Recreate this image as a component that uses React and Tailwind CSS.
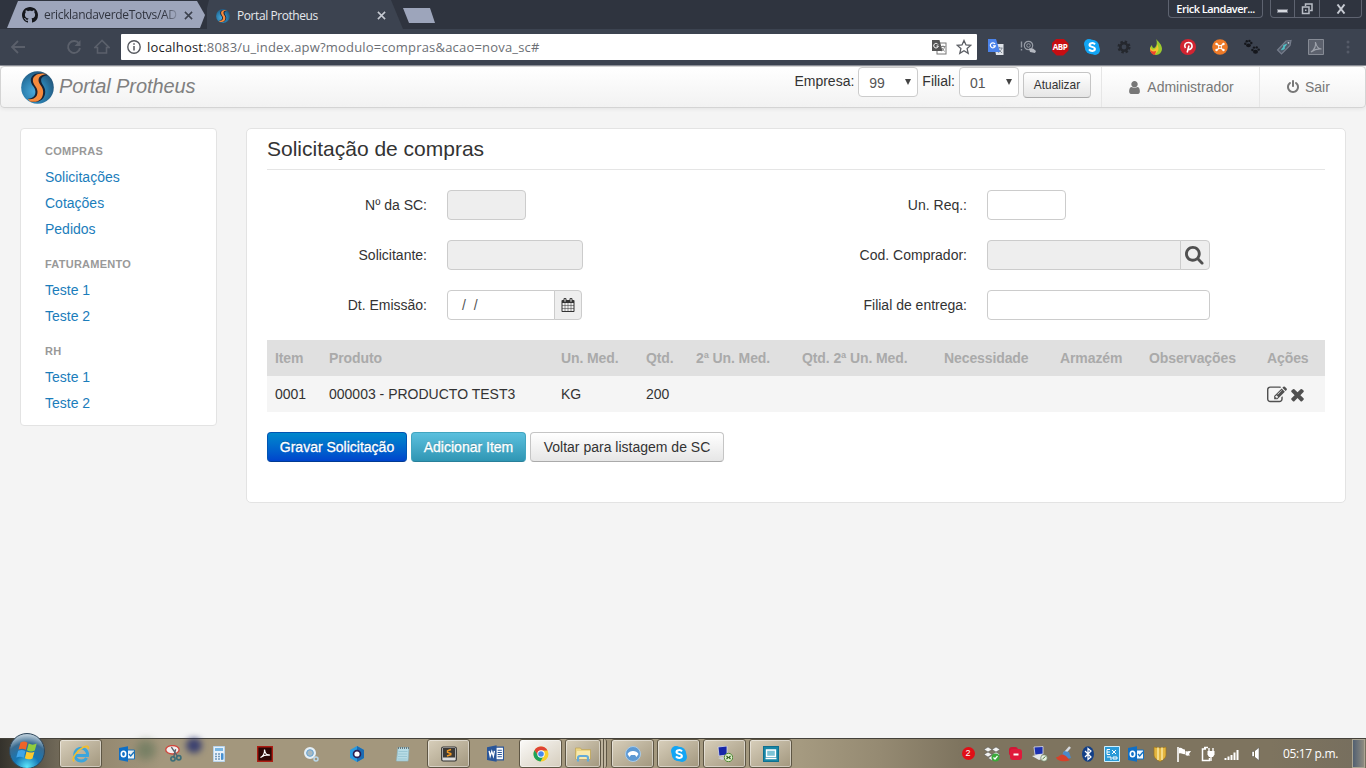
import React from "react";

const UI = "font-['Liberation_Sans',Arial,sans-serif]";
const SYS = "font-['Open_Sans','Noto_Sans',sans-serif]";

const GLYPHS = {
  search:
    "M1152 704q0-185-131.5-316.5t-316.5-131.5-316.5 131.5-131.5 316.5 131.5 316.5 316.5 131.5 316.5-131.5 131.5-316.5zm512 832q0 52-38 90t-90 38q-54 0-90-38l-343-342q-179 124-399 124-143 0-273.5-55.5t-225-150-150-225-55.5-273.5 55.5-273.5 150-225 225-150 273.5-55.5 273.5 55.5 225 150 150 225 55.5 273.5q0 220-124 399l343 343q37 37 37 90z",
  calendar:
    "M192 1664h288v-288h-288v288zm352 0h320v-288h-320v288zm-352-352h288v-320h-288v320zm352 0h320v-320h-320v320zm-352-384h288v-288h-288v288zm736 736h320v-288h-320v288zm-384-736h320v-288h-320v288zm768 736h288v-288h-288v288zm-384-352h320v-320h-320v320zm-352-864v-288q0-13-9.5-22.5t-22.5-9.5h-64q-13 0-22.5 9.5t-9.5 22.5v288q0 13 9.5 22.5t22.5 9.5h64q13 0 22.5-9.5t9.5-22.5zm736 864h288v-320h-288v320zm-384-384h320v-288h-320v288zm384 0h288v-288h-288v288zm32-480v-288q0-13-9.5-22.5t-22.5-9.5h-64q-13 0-22.5 9.5t-9.5 22.5v288q0 13 9.5 22.5t22.5 9.5h64q13 0 22.5-9.5t9.5-22.5zm384-64v1280q0 52-38 90t-90 38h-1408q-52 0-90-38t-38-90v-1280q0-52 38-90t90-38h128v-96q0-66 47-113t113-47h64q66 0 113 47t47 113v96h384v-96q0-66 47-113t113-47h64q66 0 113 47t47 113v96h128q52 0 90 38t38 90z",
  times:
    "M1490 1322q0 40-28 68l-136 136q-28 28-68 28t-68-28l-294-294-294 294q-28 28-68 28t-68-28l-136-136q-28-28-28-68t28-68l294-294-294-294q-28-28-28-68t28-68l136-136q28-28 68-28t68 28l294 294 294-294q28-28 68-28t68 28l136 136q28 28 28 68t-28 68l-294 294 294 294q28 28 28 68z",
  edit:
    "M888 1184l116-116-152-152-116 116v56h96v96h56zm440-720q-16-16-33 1l-350 350q-17 17-1 33t33-1l350-350q17-17 1-33zm80 594v190q0 119-84.5 203.5t-203.5 84.5h-832q-119 0-203.5-84.5t-84.5-203.5v-832q0-119 84.5-203.5t203.5-84.5h832q63 0 117 25 15 7 18 23 3 17-9 29l-49 49q-14 14-32 8-23-6-45-6h-832q-66 0-113 47t-47 113v832q0 66 47 113t113 47h832q66 0 113-47t47-113v-126q0-13 9-22l64-64q15-15 35-7t20 29zm-96-738l288 288-672 672h-288v-288zm444 132l-92 92-288-288 92-92q28-28 68-28t68 28l152 152q28 28 28 68t-28 68z",
  power:
    "M1664 896q0 156-61 298t-164 245-245 164-298 61-298-61-245-164-164-245-61-298q0-182 80.5-343t226.5-270q43-32 95.5-25t83.5 50q32 42 24.5 94.5t-49.5 84.5q-98 74-151.5 181t-53.5 228q0 104 40.5 198.5t109.5 163.5 163.5 109.5 198.5 40.5 198.5-40.5 163.5-109.5 109.5-163.5 40.5-198.5q0-121-53.5-228t-151.5-181q-42-32-49.5-84.5t24.5-94.5q31-43 84-50t95 25q146 109 226.5 270t80.5 343zm-640-768v640q0 52-38 90t-90 38-90-38-38-90v-640q0-52 38-90t90-38 90 38 38 90z",
  user:
    "M1536 1399q0 109-62.5 187t-150.5 78h-854q-88 0-150.5-78t-62.5-187q0-85 8.5-160.5t31.5-152 58.5-131 94-89 134.5-34.5q131 128 313 128t313-128q76 0 134.5 34.5t94 89 58.5 131 31.5 152 8.5 160.5zm-256-887q0 159-112.5 271.5t-271.5 112.5-271.5-112.5-112.5-271.5 112.5-271.5 271.5-112.5 271.5 112.5 112.5 271.5z",
};

function Glyph({ name, className }) {
  return (
    <svg viewBox="0 0 1792 1792" className={className} fill="currentColor">
      <path d={GLYPHS[name]} />
    </svg>
  );
}

function Logo({ className }) {
  return (
    <svg viewBox="0 0 32 32" className={className}>
      <defs>
        <radialGradient id="globe" cx=".4" cy=".62" r=".65">
          <stop offset="0" stopColor="#4aa9da" />
          <stop offset=".6" stopColor="#2a7cab" />
          <stop offset="1" stopColor="#22557a" />
        </radialGradient>
      </defs>
      <circle cx="16" cy="16" r="15.8" fill="url(#globe)" />
      <path d="M26 4C17 0 9.500 3 9.500 9c0 5 4.500 6.500 4.500 11 0 4-2 6-7 7l3 3c8 1 13.500-3 13.500-10 0-5-4-7-4-11 0-3 2.500-4.500 6.500-5z" fill="#172336" />
      <path d="M25.500 3C17.500 1 11.500 4 11.500 9c0 4.500 4.500 6.500 4.500 11 0 5-3 7.500-9.500 7.500l2.500 2C17 31 21.500 27 21.500 20c0-5-4.500-7-4.500-11 0-3.500 3-5.500 8.500-6z" fill="#f68a3c" />
    </svg>
  );
}

function Svg({ size = "size-4", box = 16, children }) {
  return (
    <svg viewBox={`0 0 ${box} ${box}`} className={`${size} shrink-0`} fill="none">
      {children}
    </svg>
  );
}

const TranslateGrey = (
  <Svg>
    <rect x="6" y="4" width="9" height="11" fill="#fff" stroke="#777" />
    <path d="M1 1h7.500l3 11H1z" fill="#555" />
    <path d="M7 5.500A2.300 2.300 0 1 0 7.300 7H5.500" stroke="#fff" />
    <path d="M9.500 7.500h5M12 6.500v1M13.500 8c-.5 2-1.500 3-3 4M11 9l2.500 3.500" stroke="#777" strokeWidth=".9" />
  </Svg>
);

const OutlookIcon = (
  <Svg>
    <path d="M8 4h7.500v9H8z" fill="#f4f8fc" stroke="#1272c4" />
    <path d="M10 8l1.700 2L15 6" stroke="#1272c4" strokeWidth="1.300" />
    <path d="M0 2l9-1.800v15.600L0 14z" fill="#0f6fc6" />
    <ellipse cx="4.500" cy="8" rx="2.200" ry="2.700" stroke="#fff" strokeWidth="1.600" />
  </Svg>
);

const SkypeIcon = (
  <Svg>
    <circle cx="5" cy="5" r="5" fill="#12a5f4" />
    <circle cx="11" cy="11" r="5" fill="#12a5f4" />
    <circle cx="8" cy="8" r="7.300" fill="#12a5f4" />
    <path d="M11 5.300C9.500 3.500 5.500 3.800 5.500 6c0 2.300 5.400 1.500 5.400 4 0 2.300-4.200 2.600-5.900.4" stroke="#fff" strokeWidth="2" />
  </Svg>
);

const EXTENSIONS = [
  <Svg>
    <path d="M6 5h9.500v11H8z" fill="#dfe3e8" />
    <path d="M8.500 9h6M11.500 8v1M14 9c-.5 2-2 3.500-4 4.500M10 10l4 4" stroke="#7a8390" strokeWidth=".9" />
    <path d="M0 0h8l4 13H0z" fill="#4b83ea" />
    <path d="M7 5A2.500 2.500 0 1 0 7.300 6.800H5" stroke="#fff" strokeWidth="1.200" />
  </Svg>,
  <Svg>
    <path d="M1.500 2.500v6M1.500 10v1.500" stroke="#9297a1" strokeWidth="1.400" />
    <circle cx="8.500" cy="6.500" r="4.200" stroke="#969ba5" strokeWidth="1.200" />
    <circle cx="8.500" cy="6.500" r="1.800" stroke="#969ba5" />
    <path d="M9 9.500h4l3 2.500-1 2-5-1z" fill="#b4b8c0" />
  </Svg>,
  <div className="flex size-[17px] items-center justify-center bg-[#c70d12] text-[8px] font-bold tracking-[-0.4px] text-white [clip-path:polygon(30%_0,70%_0,100%_30%,100%_70%,70%_100%,30%_100%,0_70%,0_30%)]">ABP</div>,
  SkypeIcon,
  <Svg>
    <circle cx="8" cy="8" r="5" stroke="#25282e" strokeWidth="3" strokeDasharray="2.200 1.730" />
    <circle cx="8" cy="8" r="3.700" stroke="#25282e" strokeWidth="2.600" />
  </Svg>,
  <Svg>
    <path d="M8 0c3 3 6 6 6 10a6 6 0 0 1-12 0c0-1 .5-3 2-4 0 2 1 3 2 3C9 8 9.500 3 8 0z" fill="#9dcb2d" />
    <path d="M3 8c0 2 1 3 3 2.500C9 9 9 7 9 5c3 5 1 8-2 10-3 0-5-2.500-5-5z" fill="#f5c52c" />
    <path d="M2 9c0 3 3 4 6 3 0 1-1 3-1 4-3 0-5-3-5-7z" fill="#ee432f" />
  </Svg>,
  <Svg>
    <circle cx="8" cy="8" r="8" fill="#d22431" />
    <path d="M7.200 13.500L9 6.500M5.500 9C3.500 6 5.500 3.500 8.500 3.500c4 0 4.500 5 2 6.500-1.300.8-2.500.3-2.600-.6" stroke="#fff" strokeWidth="1.600" />
  </Svg>,
  <Svg>
    <circle cx="8" cy="8" r="7.800" fill="#ee7a28" />
    <path d="M5 5l6 6M11 5l-6 6" stroke="#fff" strokeWidth="1.300" />
    <circle cx="8" cy="8" r="1.900" fill="#fff" />
    <circle cx="8" cy="8" r="1" fill="#ee7a28" />
    <circle cx="4.500" cy="5" r="1.200" fill="#fff" /><circle cx="11.500" cy="5" r="1.200" fill="#fff" />
    <circle cx="4.500" cy="11" r="1.200" fill="#fff" /><circle cx="11.500" cy="11" r="1.200" fill="#fff" />
  </Svg>,
  <Svg>
    <g fill="#15171c">
      <ellipse cx="4.500" cy="6.300" rx="2.400" ry="1.900" />
      <circle cx="1.300" cy="4.800" r="1.200" /><circle cx="2.800" cy="2.300" r="1.200" /><circle cx="5.400" cy="1.900" r="1.200" /><circle cx="7.300" cy="4" r="1.200" />
      <ellipse cx="11.500" cy="12.700" rx="2.500" ry="2" />
      <circle cx="8.400" cy="11" r="1.200" /><circle cx="10" cy="8.600" r="1.200" /><circle cx="12.700" cy="8.400" r="1.200" /><circle cx="14.700" cy="10.600" r="1.200" />
    </g>
  </Svg>,
  <Svg>
    <path d="M15 1.500L10 2 1.500 11l4 4L14 6.500z" fill="#505a69" stroke="#767d8b" strokeWidth="1.200" />
    <path d="M10 6.500c-2-1-3 .5-2 1.500s0 2.800-2 1.700M10.500 5l-5 6" stroke="#52bfc5" strokeWidth="1.200" />
    <circle cx="12.500" cy="3.800" r=".9" fill="#c5cad3" />
  </Svg>,
  <Svg>
    <path d="M.5.5h15v15H.5z" fill="#5c616d" stroke="#868b95" />
    <path d="M3 13c3-2 5-6 4.500-10 1 5 3 7 6 7-4-.5-7 .5-10.500 3z" stroke="#9da1aa" strokeWidth="1.200" />
  </Svg>,
  <Svg>
    <g fill="#555b68"><circle cx="8" cy="3" r="1.500" /><circle cx="8" cy="8" r="1.500" /><circle cx="8" cy="13" r="1.500" /></g>
  </Svg>,
];

function CloseX({ className }) {
  return (
    <svg viewBox="0 0 10 10" className={className} stroke="currentColor" strokeWidth="1.700">
      <path d="M1 1l8 8M9 1L1 9" />
    </svg>
  );
}

function TabStrip() {
  return (
    <div className="flex h-[29px] items-start bg-[#2f343f] pl-[7px]">
      <div className="flex h-[28px] w-[200px] items-center bg-[#9da5bb] pl-[15px] [clip-path:polygon(0_100%,11px_1px,190px_1px,198px_15px,193px_100%)]">
        <svg viewBox="0 0 16 16" className="mt-px size-4 shrink-0" fill="#15171c">
          <path d="M8 0C3.580 0 0 3.580 0 8c0 3.540 2.290 6.530 5.470 7.590.4.070.55-.17.55-.38 0-.19-.01-.82-.01-1.490-2.010.37-2.530-.49-2.690-.94-.09-.23-.48-.94-.82-1.130-.28-.15-.68-.52-.01-.53.63-.01 1.080.58 1.230.82.720 1.210 1.870.87 2.330.66.070-.52.280-.87.510-1.070-1.780-.2-3.640-.89-3.640-3.950 0-.87.310-1.590.820-2.150-.08-.2-.36-1.020.080-2.120 0 0 .67-.21 2.200.82.640-.18 1.320-.27 2-.27s1.360.09 2 .27c1.530-1.040 2.200-.82 2.200-.82.440 1.100.160 1.920.080 2.120.510.560.820 1.270.820 2.150 0 3.070-1.870 3.750-3.650 3.950.290.250.540.730.540 1.480 0 1.070-.01 1.930-.01 2.200 0 .210.150.460.550.380A8.010 8.010 0 0 0 16 8c0-4.420-3.580-8-8-8z" />
        </svg>
        <span className="ml-[6px] mt-px w-[133px] whitespace-nowrap text-[12px] tracking-[-0.32px] text-[#30343f] [mask-image:linear-gradient(90deg,#000_90%,rgba(0,0,0,0.2))]">ericklandaverdeTotvs/AD</span>
        <CloseX className="ml-[7px] mt-[2px] size-[9px] shrink-0 text-[#3c414d]" />
      </div>
      <div className="flex h-[29px] w-[197px] items-center bg-[#3c4350] pl-[9px] [clip-path:polygon(2px_0,184px_0,196px_100%,0_100%,0_8px)]">
        <Logo className="mt-[2px] size-[14px]" />
        <span className="ml-[7px] mt-[2px] whitespace-nowrap text-[12px] tracking-[-0.43px] text-[#e6e8ec]">Portal Protheus</span>
        <CloseX className="ml-auto mr-[18px] mt-[2px] size-[9px] text-[#c6cad2]" />
      </div>
      <div className="-ml-px mt-2 h-[15px] w-8 bg-[#9da5bb] [clip-path:polygon(0_0,27px_0,32px_100%,6px_100%)]" />
      <div className="ml-auto flex h-[18px] pr-[4px] text-[#d5d8de]">
        <div className="flex h-[18px] w-[95px] items-center justify-center rounded-b border border-t-0 border-[#5e6370] text-[11px] font-semibold tracking-[-0.52px] text-white"><span className="mt-px">Erick Landaver...</span></div>
        <div className="ml-[7px] flex h-[18px] rounded-b border border-t-0 border-[#5e6370]">
          <div className="flex w-[24px] items-center justify-center border-r border-[#5e6370]">
            <div className="mt-1 h-[4px] w-[11px] border border-[#777b86] bg-[#d5d8de]" />
          </div>
          <div className="flex w-[25px] items-center justify-center border-r border-[#5e6370]">
            <Svg size="size-3" box={12}>
              <path d="M4.500 3V1h6.500v6.500H9" stroke="#b9bdc6" strokeWidth="1.500" />
              <path d="M1.500 4h6.500v6.500H1.500z" stroke="#b9bdc6" strokeWidth="1.500" />
              <path d="M4 6.500h1.500V8H4z" fill="#b9bdc6" />
            </Svg>
          </div>
          <div className="flex w-[41px] items-center justify-center">
            <svg viewBox="0 0 10 10" className="size-[10px]" stroke="#c6cad2" strokeWidth="2">
              <path d="M1.500 .5l7 9M8.500 .5l-7 9" />
            </svg>
          </div>
        </div>
      </div>
    </div>
  );
}

function Toolbar() {
  return (
    <div className="flex h-[37px] items-center border-b border-[#8b8e96] bg-[#3c4350] pl-[10px] pr-[2px]">
      <Svg><path d="M15 8H2M8 2L2 8l6 6" stroke="#5b606b" strokeWidth="1.800" /></Svg>
      <span className="w-[40px]" />
      <Svg>
        <path d="M13 4.500A6 6 0 1 0 14 9" stroke="#5b606b" strokeWidth="1.900" />
        <path d="M14.500 1v6h-6z" fill="#5b606b" />
      </Svg>
      <span className="w-[12px]" />
      <Svg><path d="M8 1.500L1 8.500h2.500V14h9V8.500H15z" stroke="#5b606b" strokeWidth="1.600" /></Svg>
      <div className="ml-[11px] flex h-[26px] w-[856px] items-center rounded-[1px] bg-white pl-[6px] pr-[5px]">
        <Svg size="size-[14px]" box={14}>
          <circle cx="7" cy="7" r="6.200" stroke="#55585e" strokeWidth="1.400" />
          <path d="M7 6v4.500M7 3.300v1.500" stroke="#55585e" strokeWidth="1.500" />
        </Svg>
        <span className="ml-[6px] mt-px whitespace-nowrap text-[13px] tracking-[0.19px] text-[#6c6f75]">
          <span className="text-[#1b1c1e]">localhost</span>:8083/u_index.apw?modulo=compras&amp;acao=nova_sc#
        </span>
        <span className="ml-auto">{TranslateGrey}</span>
        <span className="ml-[9px]">
          <Svg><path d="M8 1.500l2 4.500 4.700.4-3.600 3.200 1.100 4.700L8 11.800l-4.200 2.500 1.100-4.700L1.300 6.400 6 6z" stroke="#5a5d63" strokeWidth="1.300" /></Svg>
        </span>
      </div>
      <div className="ml-[3px] flex items-center">
        {EXTENSIONS.map((icon, i) => (
          <div key={i} className="flex w-8 justify-center">{icon}</div>
        ))}
      </div>
    </div>
  );
}

function NavSelect({ value }) {
  return (
    <div className="flex h-[30px] w-[60px] items-center justify-between rounded border border-[#ccc] bg-white pl-[10px] pr-[6px] text-[#555]">
      <span className="pt-[2px]">{value}</span>
      <span className="h-0 w-0 border-x-[3px] border-t-[6px] border-x-transparent border-t-[#444]" />
    </div>
  );
}

function Navbar() {
  return (
    <div className="flex h-[42px] items-start rounded border border-[#d4d4d4] bg-linear-to-b from-white to-[#f2f2f2] pl-[20px] shadow-[0_1px_4px_rgba(0,0,0,0.065)]">
      <Logo className="mt-[4px] size-[33px]" />
      <span className="ml-[5px] mt-[5px] text-[20px] italic leading-[28px] tracking-[-0.1px] text-[#808080]">Portal Protheus</span>
      <div className="ml-auto flex items-start">
        <span className="mr-[4px] mt-[4px]">Empresa:</span>
        <NavSelect value="99" />
        <span className="mx-[4px] mt-[4px]">Filial:</span>
        <NavSelect value="01" />
        <div className="ml-[4px] mt-[5px] flex h-[26px] w-[68px] items-center justify-center rounded border border-[#c5c5c5] border-b-[#aaa] bg-linear-to-b from-white to-[#e6e6e6] text-[11.9px]">Atualizar</div>
      </div>
      <div className="ml-[10px] flex h-[40px] w-[158px] items-center justify-center border-l border-[#e6e6e6] text-[#777]">
        <Glyph name="user" className="mr-[5px] size-[15px]" />
        <span>Administrador</span>
      </div>
      <div className="flex h-[40px] w-[106px] items-center border-l border-[#e6e6e6] pl-[26px] text-[#777]">
        <Glyph name="power" className="mr-[5px] size-[14px]" />
        <span>Sair</span>
      </div>
    </div>
  );
}

const MENU = [
  { title: "COMPRAS", items: ["Solicitações", "Cotações", "Pedidos"] },
  { title: "FATURAMENTO", items: ["Teste 1", "Teste 2"] },
  { title: "RH", items: ["Teste 1", "Teste 2"] },
];

function Sidebar() {
  return (
    <nav className="flex h-[298px] w-[197px] flex-col gap-[9px] rounded border border-[#e3e3e3] bg-white pl-[24px] pt-[9px]">
      {MENU.map((group) => (
        <div key={group.title}>
          <div className="h-[26px] text-[11px] font-bold leading-[27px] tracking-[0.25px] text-[#999]">{group.title}</div>
          {group.items.map((item) => (
            <div key={item} className="h-[26px] leading-[27px] text-[#1b7dbb]">{item}</div>
          ))}
        </div>
      ))}
    </nav>
  );
}

function Field({ label, children }) {
  return (
    <div className="flex h-[30px] gap-[20px]">
      <div className="w-[160px] text-right leading-[31px]">{label}</div>
      {children}
    </div>
  );
}

const BOX = "h-[30px] border border-[#ccc]";
const OFF = "bg-[#eee]";

function Form() {
  return (
    <div className="mt-[20px] grid grid-cols-[540px_1fr] gap-y-[20px]">
      <Field label="Nº da SC:"><div className={`${BOX} ${OFF} w-[79px] rounded`} /></Field>
      <Field label="Un. Req.:"><div className={`${BOX} w-[79px] rounded`} /></Field>
      <Field label="Solicitante:"><div className={`${BOX} ${OFF} w-[136px] rounded`} /></Field>
      <Field label="Cod. Comprador:">
        <div className="flex">
          <div className={`${BOX} ${OFF} w-[194px] rounded-l`} />
          <div className={`${BOX} ${OFF} -ml-px flex w-[30px] items-center justify-center rounded-r text-[#505050]`}>
            <Glyph name="search" className="mt-[2px] size-[20px]" />
          </div>
        </div>
      </Field>
      <Field label="Dt. Emissão:">
        <div className="flex">
          <div className={`${BOX} w-[108px] whitespace-pre rounded-l pl-[14px] leading-[29px] text-[#555]`}>/  /</div>
          <div className={`${BOX} ${OFF} -ml-px flex w-[28px] items-center justify-center rounded-r text-[#333]`}>
            <Glyph name="calendar" className="size-[14px]" />
          </div>
        </div>
      </Field>
      <Field label="Filial de entrega:"><div className={`${BOX} w-[223px] rounded`} /></Field>
    </div>
  );
}

const COLUMNS = ["Item", "Produto", "Un. Med.", "Qtd.", "2ª Un. Med.", "Qtd. 2ª Un. Med.", "Necessidade", "Armazém", "Observações", "Ações"];
const ROW = ["0001", "000003 - PRODUCTO TEST3", "KG", "200", "", "", "", "", ""];
const TRACKS = "grid grid-cols-[54px_232px_85px_50px_106px_142px_116px_89px_118px_66px] h-[36px] leading-[37px] whitespace-nowrap";

function Table() {
  return (
    <div className="mt-[20px]">
      <div className={`${TRACKS} bg-[#e0e0e0] font-bold tracking-[-0.1px] text-[#aaa]`}>
        {COLUMNS.map((c) => <div key={c} className="pl-2">{c}</div>)}
      </div>
      <div className={`${TRACKS} bg-[#f5f5f5]`}>
        {ROW.map((c, i) => <div key={i} className="pl-2">{c}</div>)}
        <div className="flex items-center gap-px pl-2 text-[#505050]">
          <Glyph name="edit" className="size-[20px]" />
          <Glyph name="times" className="-mt-px size-[19px]" />
        </div>
      </div>
    </div>
  );
}

function Buttons() {
  const base = "flex h-[30px] items-center justify-center rounded border";
  return (
    <div className="mt-[20px] flex gap-[4px]">
      <div className={`${base} w-[140px] border-[#0055b3] border-b-[#003a93] bg-linear-to-b from-[#0088cc] to-[#0044cc] text-white [-webkit-text-stroke:0.3px_white] [text-shadow:0_-1px_0_rgba(0,0,0,0.25)]`}>Gravar Solicitação</div>
      <div className={`${base} w-[115px] border-[#42a5c0] border-b-[#28809a] bg-linear-to-b from-[#5bc0de] to-[#2f96b4] text-white [-webkit-text-stroke:0.3px_white] [text-shadow:0_-1px_0_rgba(0,0,0,0.25)]`}>Adicionar Item</div>
      <div className={`${base} w-[194px] border-[#c5c5c5] border-b-[#aaa] bg-linear-to-b from-white to-[#e6e6e6]`}>Voltar para listagem de SC</div>
    </div>
  );
}

const Word = (
  <Svg size="size-[17px]">
    <path d="M8 2h7.500v12H8z" fill="#fff" stroke="#2a5699" />
    <path d="M10 5h4M10 7h4M10 9h4M10 11h4" stroke="#2a5699" />
    <path d="M0 2l9-1.800v15.600L0 14z" fill="#2a5699" />
    <path d="M2 5.500l1 5 1.500-4.500L6 10.500l1-5" stroke="#fff" strokeWidth="1.200" />
  </Svg>
);

const APPS = [
  { kind: "open", icon: (
    <Svg size="size-[18px]">
      <path d="M2.300 9.300h11.500A5.700 5.700 0 1 0 13 11.500" stroke="#3ba5dd" strokeWidth="2.600" />
      <path d="M2 14.500C-1 13 4 5 10 2c3-1.500 5-1 4.500 1.500" stroke="#f2bd2c" strokeWidth="1.500" />
    </Svg>) },
  { icon: OutlookIcon },
  { icon: (
    <Svg size="size-[17px]">
      <ellipse cx="7" cy="4.500" rx="6.300" ry="4" fill="#f4eeee" stroke="#d0483d" strokeWidth="1.300" />
      <path d="M6 2l6 9M10 4l-2 8" stroke="#59606b" strokeWidth="1.300" />
      <circle cx="7.500" cy="13" r="2" stroke="#3c6d78" strokeWidth="1.500" /><circle cx="13" cy="12" r="2" stroke="#3c6d78" strokeWidth="1.500" />
    </Svg>) },
  { icon: (
    <Svg>
      <path d="M2.500.5h11v15h-11z" fill="#e7f1fa" stroke="#b8d3ea" />
      <path d="M4 2h8v3H4z" fill="#78b6e3" />
      <path d="M4 8h8M4 10.500h8M4 13h8" stroke="#7198bb" strokeWidth="1.500" strokeDasharray="2 1" />
      <path d="M10 7.500h2.500v6H10z" fill="#4591d2" />
    </Svg>) },
  { icon: (
    <Svg>
      <path d="M.7.7h14.600v14.600H.7z" fill="#2b0806" stroke="#ad1d13" strokeWidth="1.400" />
      <path d="M3.500 11.500C6 10.500 8 7 7.500 3.500c.5 4 2 6 5.500 5.500-4-.5-6 0-9.500 2.500z" stroke="#fff" strokeWidth="1.200" />
    </Svg>) },
  { icon: (
    <Svg>
      <circle cx="7" cy="7" r="4.800" fill="#a9b9bf" stroke="#e4eff6" strokeWidth="2.400" />
      <circle cx="7" cy="7" r="3.300" stroke="#65a5d6" />
      <circle cx="13" cy="13" r="2" stroke="#b9d7ea" strokeWidth="1.500" />
    </Svg>) },
  { icon: (
    <Svg>
      <path d="M8 0l7 4v8l-7 4-7-4V4z" fill="#2a9be0" />
      <path d="M8 0l7 4v8l-7 4z" fill="#1b6cb4" />
      <circle cx="8" cy="8" r="4.300" fill="#2a2055" /><circle cx="8" cy="8" r="2.600" fill="#fff" />
    </Svg>) },
  { icon: (
    <Svg>
      <path d="M3 1.500h11L13 15H1.500z" fill="#b8dce5" stroke="#8fbcc9" strokeWidth=".7" />
      <path d="M3 2h11" stroke="#68767b" strokeWidth="2" strokeDasharray="1 1" />
      <path d="M3.500 5.500h9M3.200 8h9M3 10.500h9M2.800 13h9" stroke="#92c2cf" strokeWidth=".8" />
    </Svg>) },
  { kind: "open", icon: (
    <Svg>
      <rect x=".7" y="1" width="14.600" height="14" rx="1.500" fill="#ddd" stroke="#333" strokeWidth="1.200" />
      <path d="M2 2h12v9.500H2z" fill="#3d3a36" />
      <path d="M10 3.500L6.500 4.800v1.500l3.300 1.200v1.200L6 10" stroke="#f59a22" strokeWidth="1.400" />
    </Svg>) },
  { icon: Word },
  { kind: "active", icon: (
    <Svg>
      <circle cx="8" cy="8" r="7.500" fill="#f9cf2c" />
      <path d="M1.500 4.200A7.500 7.500 0 0 1 14.500 4.500H8L5 10z" fill="#df4234" />
      <path d="M1.500 4.200A7.500 7.500 0 0 0 7.500 15.500l3.300-6L8 11 5 9.500z" fill="#1ca25c" />
      <circle cx="8" cy="8" r="3.700" fill="#fff" /><circle cx="8" cy="8" r="2.800" fill="#4688ee" />
    </Svg>) },
  { kind: "stack", icon: (
    <Svg>
      <path d="M.5 2h5l1 1.500h9V13H.5z" fill="#ecd583" stroke="#bba258" strokeWidth=".7" />
      <path d="M2 5h13v8H1z" fill="#f7e9ac" />
      <path d="M3 15.500V12a2 2 0 0 1 2-2h6a2 2 0 0 1 2 2v3.500" stroke="#64abd8" strokeWidth="2.200" />
    </Svg>) },
  { kind: "open", icon: (
    <Svg>
      <circle cx="8" cy="8" r="7.500" fill="#5d99d3" stroke="#a9cce8" />
      <path d="M2.500 8c2-4 9-4 11 0l-2 3-1.500-2H6l-1.500 2z" fill="#fff" />
    </Svg>) },
  { kind: "open", icon: SkypeIcon },
  { kind: "open", icon: (
    <Svg>
      <path d="M1 1l9-1v9l-8 1z" fill="#1726a8" stroke="#d7dce8" strokeWidth=".8" />
      <path d="M1 12l7-2 3 2-6 2z" fill="#c9ced6" />
      <circle cx="11.500" cy="11.500" r="4.200" fill="#dcedc9" stroke="#4f8833" />
      <path d="M9.500 10l1.500 1.500L9.500 13M13.500 10L12 11.500l1.500 1.500" stroke="#2e5d19" strokeWidth="1.100" />
    </Svg>) },
  { kind: "open", icon: (
    <Svg>
      <rect x=".5" y=".5" width="15" height="15" fill="#1786a6" stroke="#0f6f8f" />
      <path d="M3.500 4h9v6.500h-9z" fill="#7cc3d6" stroke="#fff" strokeWidth="1.400" /><path d="M2.500 12.500h11" stroke="#fff" strokeWidth="1.500" />
    </Svg>) },
];

function AppCell({ app }) {
  if (!app.kind) return <div className="flex w-[46px] items-center justify-center">{app.icon}</div>;
  if (app.kind === "stack") {
    return (
      <div className="flex w-[46px] pl-[1px]">
        <div className="flex w-[36px] items-center justify-center rounded-[3px] border border-[#5e5644] bg-linear-to-br from-[#d8cfbb] to-[#a2977e] shadow-[inset_0_0_0_1px_rgba(255,255,255,0.45)]">{app.icon}</div>
        <div className="w-[3px] border-r border-[#5e5644] bg-[#bdb39d]" />
        <div className="w-[3px] rounded-r border-r border-[#5e5644] bg-[#bdb39d]" />
      </div>
    );
  }
  const fill = app.kind === "active" ? "bg-linear-to-br from-[#fbfaf8] to-[#d5cdbd]" : "bg-linear-to-br from-[#d8cfbb] to-[#a2977e]";
  return (
    <div className="flex w-[46px] pl-px pr-[2px]">
      <div className={`flex w-full items-center justify-center rounded-[3px] border border-[#5e5644] shadow-[inset_0_0_0_1px_rgba(255,255,255,0.45)] ${fill}`}>{app.icon}</div>
    </div>
  );
}

const TRAY = [
  <div className={`flex size-[13px] items-center justify-center rounded-full bg-[#e00f17] text-[9px] text-white ${UI}`}>2</div>,
  <Svg>
    <path d="M4 1l4 2.500L4 6 0 3.500zM12 1l4 2.500L12 6 8 3.500zM4 6l4 2.500L4 11 0 8.500zM12 6l4 2.500-4 2.500-4-2.500zM4 12l4-2.500 4 2.500-4 2.500z" fill="#f2f3f1" stroke="#555" strokeWidth=".5" />
    <circle cx="11.500" cy="11.500" r="4" fill="#3da93b" /><path d="M9.500 11.500l1.500 1.500 2.500-3" stroke="#fff" strokeWidth="1.200" />
  </Svg>,
  <Svg><rect x="1" y="1" width="9" height="9" rx="3" fill="#cf1736" /><rect x="2" y="3" width="12" height="11" rx="3" fill="#e0193b" /><path d="M5.500 8.500h5" stroke="#fff" strokeWidth="2" /></Svg>,
  <Svg>
    <path d="M2 1l9-.5V8L3 9z" fill="#1b30b0" stroke="#dde" strokeWidth=".8" /><path d="M0 10l9-2 6 3-8 3z" fill="#e4e7ea" />
    <circle cx="12" cy="12" r="3.300" fill="#e7efe0" stroke="#61755a" strokeWidth=".7" /><path d="M10.500 13l3-2.500" stroke="#527741" />
  </Svg>,
  <Svg>
    <path d="M14 1L8 8" stroke="#d7dbe2" strokeWidth="2.500" /><path d="M8 5l5 1 2 6-4 1-5-4z" fill="#4d89c7" /><path d="M0 11c3 1 4-4 8-2 3 1 4 4 6 5-4 2-13 2-14-3z" fill="#d6402a" />
  </Svg>,
  <Svg><ellipse cx="8" cy="8" rx="6" ry="7.800" fill="#123f87" /><path d="M5 5l6 6-3 2.500v-11L11 5l-6 6" stroke="#fff" strokeWidth="1.200" /></Svg>,
  <Svg>
    <path d="M.5.5h15v15H.5z" fill="#2a9ad7" stroke="#cdefff" /><path d="M3 3.500h3M3 6h3M3 3.500v5h3M8 4l4 4M12 4L8 8M3 11h4v3M9 11h4v2H9z" stroke="#fff" />
  </Svg>,
  OutlookIcon,
  <Svg><path d="M2 1c4 1 8 1 12 0v8c0 3-3 5-6 6.500C5 14 2 12 2 9z" fill="#e3b53f" stroke="#9b741c" strokeWidth=".7" /><path d="M6 1.500V14M10 1.500V14" stroke="#fae7a0" strokeWidth="1.500" /></Svg>,
  <Svg><path d="M2 1v15" stroke="#fff" strokeWidth="1.600" /><path d="M3 2c3-1 4 2 6 1.500V8C7 9 6 6.500 3 7.500zM9.500 5c2 1 3 0 5.500 0l-2 3 1 1.500c-2 0-3 .5-4.500-.5z" fill="#fff" /></Svg>,
  <Svg>
    <path d="M6 3H2.500v11.500h7V12M4 1.500h4" stroke="#fff" strokeWidth="1.500" /><path d="M7.500 5h7v3.500L13 11h-4L7.500 8.500z" fill="#fff" /><path d="M9 2v3M13 2v3M11 11v4" stroke="#fff" strokeWidth="1.400" />
  </Svg>,
  <Svg><path d="M1.500 14v-2M4.500 14v-3.500M7.500 14V9M10.500 14V6.500M13.500 14V4" stroke="#fff" strokeWidth="2" /></Svg>,
  <Svg><path d="M4 5.500h2L11 1.500v13L6 10.500H4z" fill="#fff" stroke="#555" strokeWidth=".5" /><path d="M6.500 5v6" stroke="#71684f" /></Svg>,
];

function Taskbar() {
  return (
    <div className="flex h-[30px] border-t border-[#44413a] bg-[linear-gradient(90deg,#34322c_0,#4d483c_24px,#696253_50px,#948870_100px,#a3977d_160px,#a3977d_620px,#a59a80_800px,#958a72_880px,#7e745f_960px,#7e745f_1270px,#766e5e_1366px)]">
      <div className="relative w-[58px]">
        <svg viewBox="0 0 38 38" className="absolute -top-[7px] left-[8px] size-[38px]">
          <defs>
            <radialGradient id="orb" cx=".5" cy=".95" r=".9">
              <stop offset="0" stopColor="#5be6fb" /><stop offset=".4" stopColor="#1677b5" /><stop offset=".75" stopColor="#3a6b90" /><stop offset="1" stopColor="#b3c7d5" />
            </radialGradient>
          </defs>
          <circle cx="19" cy="19" r="17.500" fill="url(#orb)" stroke="#30485c" />
          <path d="M12.500 10.500c3-1.500 4.500-1.200 7 .2l-1.700 7c-2.700-1.500-4.600-1.300-7.300-.2z" fill="#ee6428" />
          <path d="M20.700 11.500c3 1.500 5 1.500 8 0l-1.900 7c-3 1.300-5 1.200-7.900-.3z" fill="#90cc3d" />
          <path d="M10.100 18.800c3-1.300 4.700-1.200 7.300.2l-1.600 6.700c-2.600-1.300-4.700-1.300-7.500-.2z" fill="#3fa4e8" />
          <path d="M18.500 19.500c3 1.500 5 1.400 7.900.2l-1.900 6.700c-3 1.400-5 1.200-7.600-.2z" fill="#fdc92e" />
        </svg>
      </div>
      <div className="relative flex">
        <div className="absolute left-[78px] top-px size-5 rounded-full bg-[#5e7357]/60 blur-[4px]" />
        <div className="absolute left-[128px] -top-px h-[15px] w-[16px] rounded-full bg-[#232d6d]/80 blur-[3px]" />
        {APPS.map((app, i) => <AppCell key={i} app={app} />)}
      </div>
      <div className="ml-auto flex items-center">
        {TRAY.map((icon, i) => <div key={i} className="flex w-6 justify-center">{icon}</div>)}
      </div>
      <div className="flex w-[84px] items-center justify-center whitespace-nowrap pl-px text-[12px] tracking-[-0.35px] text-white">05:17 p.m.</div>
      <div className="mr-px w-[13px] border border-[#aaa594] bg-linear-to-r from-[#526071] to-[#8f8b80]" />
    </div>
  );
}

export default function App() {
  return (
    <div className={`flex h-[768px] w-[1366px] flex-col overflow-hidden ${SYS}`}>
      <TabStrip />
      <Toolbar />
      <main className={`h-[672px] bg-[#f4f4f4] text-[14px] leading-[20px] text-[#333] ${UI}`}>
        <Navbar />
        <div className="flex items-start gap-[29px] pl-[20px] pt-[20px]">
          <Sidebar />
          <section className="h-[375px] w-[1100px] rounded-[5px] border border-[#e3e3e3] bg-white px-[20px]">
            <h1 className="h-[41px] border-b border-[#e5e5e5] text-[21px] leading-[40px]">Solicitação de compras</h1>
            <Form />
            <Table />
            <Buttons />
          </section>
        </div>
      </main>
      <Taskbar />
    </div>
  );
}
